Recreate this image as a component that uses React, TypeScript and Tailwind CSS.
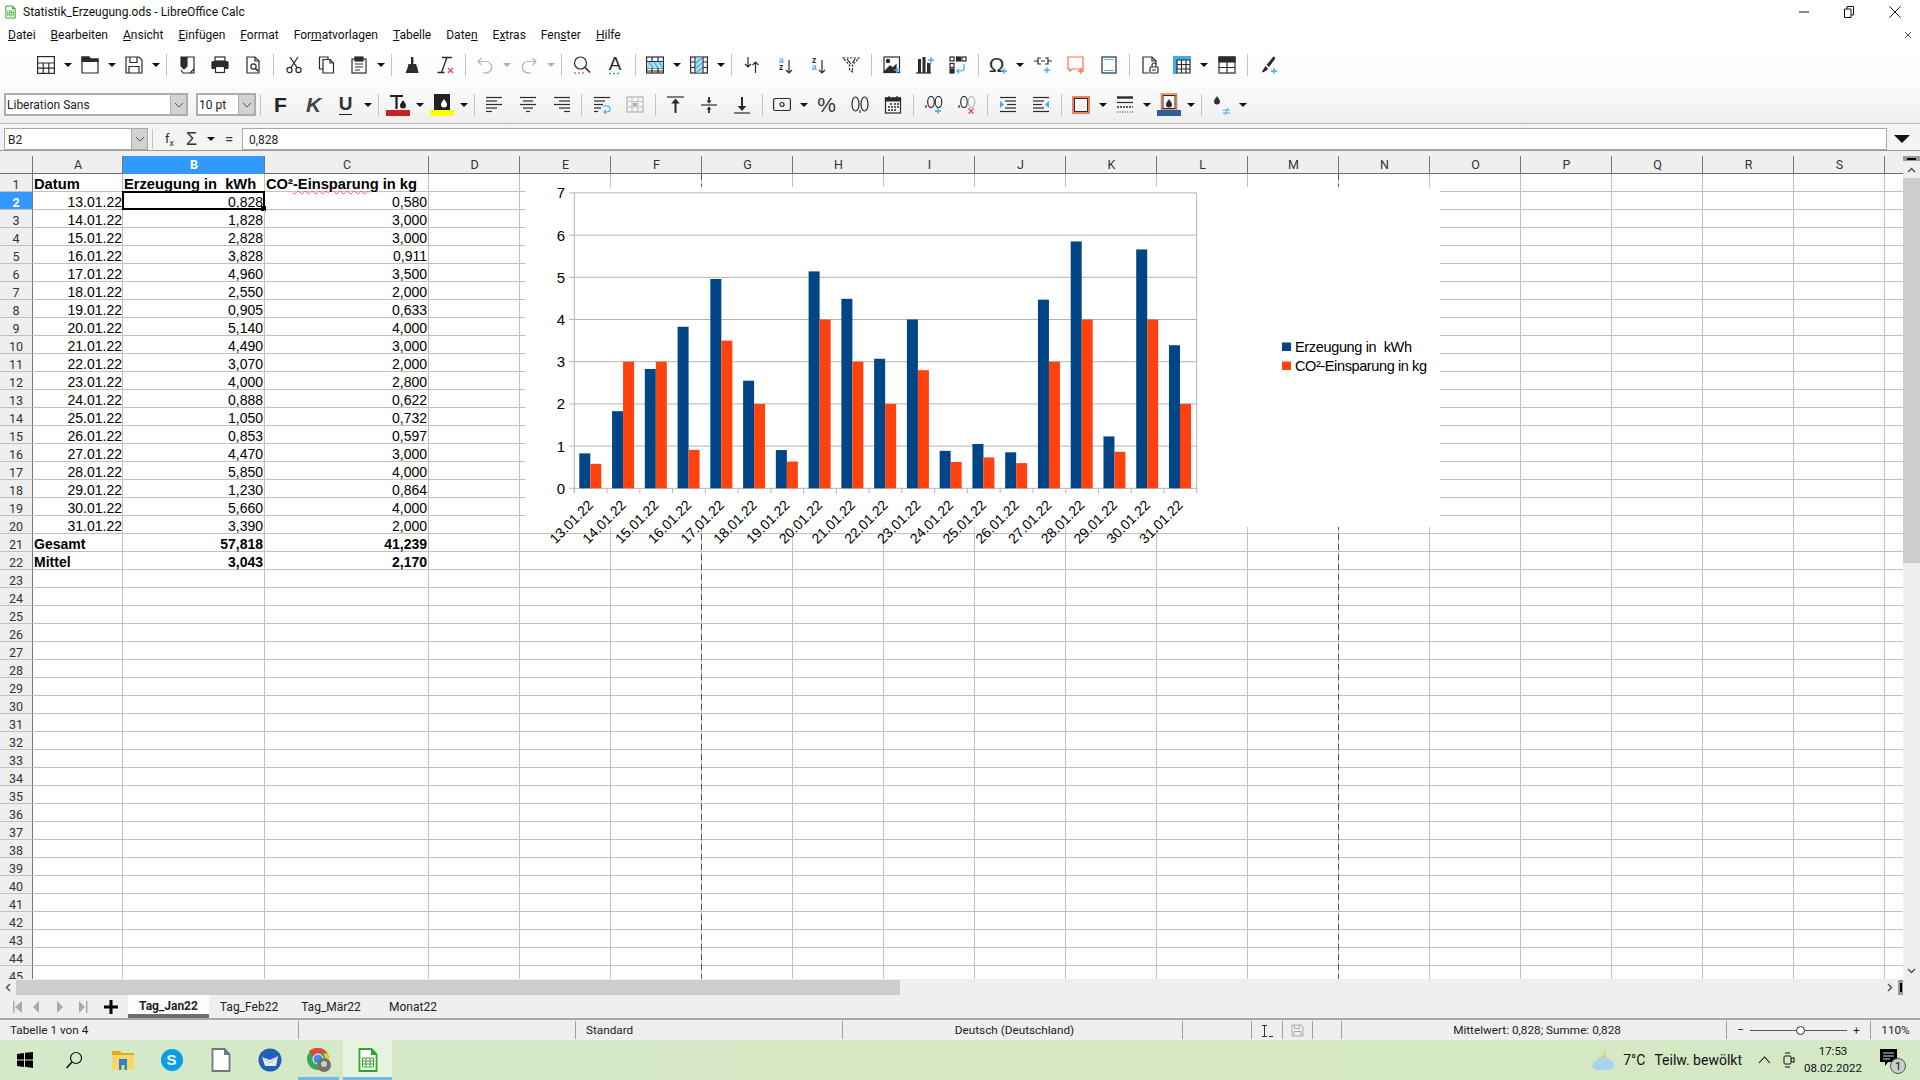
import type { ReactNode } from "react";

const uiFont = "font-['Roboto',sans-serif]";
const ink = "#2b2b2b";
const blue = "#3daee9";
const red = "#e0565b";
const coral = "#f0734a";

// ---- sheet data ----
const rows: [string, string, string][] = [
  ["13.01.22", "0,828", "0,580"],
  ["14.01.22", "1,828", "3,000"],
  ["15.01.22", "2,828", "3,000"],
  ["16.01.22", "3,828", "0,911"],
  ["17.01.22", "4,960", "3,500"],
  ["18.01.22", "2,550", "2,000"],
  ["19.01.22", "0,905", "0,633"],
  ["20.01.22", "5,140", "4,000"],
  ["21.01.22", "4,490", "3,000"],
  ["22.01.22", "3,070", "2,000"],
  ["23.01.22", "4,000", "2,800"],
  ["24.01.22", "0,888", "0,622"],
  ["25.01.22", "1,050", "0,732"],
  ["26.01.22", "0,853", "0,597"],
  ["27.01.22", "4,470", "3,000"],
  ["28.01.22", "5,850", "4,000"],
  ["29.01.22", "1,230", "0,864"],
  ["30.01.22", "5,660", "4,000"],
  ["31.01.22", "3,390", "2,000"],
];
const wideCols = "DEFGHIJKLMNOPQRS".split("");
const menus: [string, string, string][] = [
  ["", "D", "atei"],
  ["", "B", "earbeiten"],
  ["", "A", "nsicht"],
  ["", "E", "infügen"],
  ["", "F", "ormat"],
  ["For", "m", "atvorlagen"],
  ["", "T", "abelle"],
  ["Date", "n", ""],
  ["E", "x", "tras"],
  ["Fen", "s", "ter"],
  ["", "H", "ilfe"],
];

// ---- toolbar pieces ----
function G({ children, w = 18, h = 18 }: { children: ReactNode; w?: number; h?: number }) {
  return (
    <svg width={w} height={h} viewBox={`0 0 ${w} ${h}`} fill="none" stroke={ink} strokeWidth="1.2">
      {children}
    </svg>
  );
}
const Plus = ({ x = 14, y = 14, c = blue }: { x?: number; y?: number; c?: string }) => (
  <path d={`M${x - 3} ${y}h6M${x} ${y - 3}v6`} stroke={c} strokeWidth="1.3" />
);
const Cross = ({ x = 14, y = 15 }: { x?: number; y?: number }) => (
  <path d={`M${x - 2.5} ${y - 2.5}l5 5M${x + 2.5} ${y - 2.5}l-5 5`} stroke={red} strokeWidth="1.5" />
);
const Drop = ({ x = 12, y = 8, c = ink }: { x?: number; y?: number; c?: string }) => (
  <path d={`M${x} ${y}c1.5 2.5 3 3.6 3 5.4a3 3 0 0 1-6 0c0-1.8 1.5-2.9 3-5.4z`} fill={c} stroke="none" />
);
function Lines({ ys }: { ys: [number, number, number][] }) {
  return (
    <>
      {ys.map(([y, a, b]) => (
        <path key={y + "-" + a} d={`M${a} ${y}H${b}`} />
      ))}
    </>
  );
}

function Btn({ children }: { children: ReactNode }) {
  return <div className="flex w-[33px] shrink-0 items-center justify-center">{children}</div>;
}
function Drp({ children, off }: { children: ReactNode; off?: boolean }) {
  return (
    <div className="flex w-[44px] shrink-0 items-center">
      <div className="flex w-[31px] items-center justify-center">{children}</div>
      <div className="flex w-[13px] justify-center">
        <div className={`h-0 w-0 border-x-[4px] border-t-[4px] border-x-transparent ${off ? "border-t-[#b0b0b0]" : "border-t-[#111]"}`} />
      </div>
    </div>
  );
}
function Sep() {
  return (
    <div className="flex w-[8px] shrink-0 justify-center">
      <div className="h-[22px] w-px bg-[#c4c4c4]" />
    </div>
  );
}

function ToolbarTop() {
  return (
    <div className="flex h-[38px] items-center pl-[30.5px]">
      <Drp>
        <G><rect x=".6" y=".6" width="16.8" height="16.8" /><path d="M.6 7h16.8M.6 12.2h16.8M6.2 7v10.4M11.8 7v10.4" /></G>
      </Drp>
      <Drp>
        <G><path d="M1 1h7l1.5 2H17v14H1z" /><path d="M1 1h7l1.5 2H17v2.5H1z" fill={ink} /></G>
      </Drp>
      <Drp>
        <G><path d="M1 1h13l3 3v13H1z" /><path d="M5 1v5.5h7V1M4 17v-6.5h10V17" /></G>
      </Drp>
      <Sep />
      <Btn>
        <G><path d="M9 1h7v16H5l-2-3" /><path d="M3 1h6v9l-3 3-3-3z" fill={ink} /><path d="M12 17l4-4" /></G>
      </Btn>
      <Btn>
        <G><rect x="4" y="1" width="10" height="4" /><rect x="1" y="5.5" width="16" height="7" rx="1" fill={ink} /><rect x="4.5" y="10.5" width="9" height="6" fill="#fff" /></G>
      </Btn>
      <Btn>
        <G><path d="M3 1h8l4 4v12H3z" /><path d="M11 1v4h4" /><circle cx="9.5" cy="10.5" r="2.6" /><path d="M11.5 12.5l2.6 2.6" strokeWidth="1.6" /></G>
      </Btn>
      <Sep />
      <Btn>
        <G><circle cx="4.5" cy="14" r="2.6" /><circle cx="13.5" cy="14" r="2.6" /><path d="M5.8 11.8L13 1M12.2 11.8L5 1" /></G>
      </Btn>
      <Btn>
        <G><path d="M5 13H1.5V1H10v2.5" /><path d="M5 3.5h7l3.5 3.5v10H5z" /><path d="M12 3.5V7h3.5" /></G>
      </Btn>
      <Drp>
        <G><rect x="2" y="3" width="14" height="14" /><rect x="5" y="1" width="8" height="4" fill={ink} /><path d="M5 8h8M5 11h8M5 14h5" /></G>
      </Drp>
      <Sep />
      <Btn>
        <G><rect x="8" y="1" width="2.4" height="7" fill={ink} stroke="none" /><path d="M5.5 8h7.5l1.5 4 1 5H2.5l2-5z" fill={ink} stroke="none" /></G>
      </Btn>
      <Btn>
        <G><path d="M6 1.5h10M11 1.5L5.5 16.5M1.5 16.5h7" strokeWidth="1.3" /><Cross x={14.5} y={14.5} /></G>
      </Btn>
      <Sep />
      <Drp off>
        <G><path d="M5.5 2L2 5.5 5.5 9M2 5.5h8a5.7 5.7 0 0 1 0 11.4H7" stroke="#b4b4b4" /></G>
      </Drp>
      <Drp off>
        <G><path d="M12.5 2L16 5.5 12.5 9M16 5.5H8a5.7 5.7 0 0 0 0 11.4h3" stroke="#b4b4b4" /></G>
      </Drp>
      <Sep />
      <Btn>
        <G><circle cx="7.5" cy="7" r="6" /><path d="M12 11.5l5 5" strokeWidth="1.5" /><path d="M1 17h10" stroke={coral} strokeWidth="1.6" strokeDasharray="2 2" /></G>
      </Btn>
      <Btn>
        <svg className="overflow-visible" width="18" height="20" viewBox="0 0 18 20">
          <text x="9" y="14.5" textAnchor="middle" fontFamily="Liberation Sans" fontSize="19" fill={ink}>A</text>
          <path d="M3 18.5h11" stroke="#3fae5a" strokeWidth="1.6" strokeDasharray="2 2" />
        </svg>
      </Btn>
      <Sep />
      <Drp>
        <G><rect x=".6" y="1" width="16.8" height="16" /><path d="M.6 5.5h16.8M.6 12h16.8M.6 15h16.8M6 1v4.5M12 1v4.5M6 12v5M12 12v5" /><path d="M1 6h16v6H1z" fill="#a8def5" stroke="none" /><path d="M3 6l4 6M8 6l4 6M13 6l4 6" stroke={blue} /></G>
      </Drp>
      <Drp>
        <G><rect x=".6" y="1" width="16.8" height="16" /><path d="M5 1v16M13 1v16M.6 6h4.4M.6 11.5h4.4M13 6h4.4M13 11.5h4.4" /><path d="M6 1.5h6v15H6z" fill="#a8def5" stroke="none" /><path d="M6 7l6-5M6 12l6-5M6 17l6-5" stroke={blue} /></G>
      </Drp>
      <Sep />
      <Btn>
        <G><path d="M5 1v10M2 8l3 3 3-3" /><path d="M12.5 17V6M9.5 9l3-3 3 3" /></G>
      </Btn>
      <Btn>
        <svg className="overflow-visible" width="18" height="18" viewBox="0 0 18 18" fill="none">
          <text x="5" y="6.5" textAnchor="middle" fontFamily="Liberation Sans" fontWeight="700" fontSize="8.5" fill={blue}>a</text>
          <text x="5" y="14" textAnchor="middle" fontFamily="Liberation Sans" fontWeight="700" fontSize="8.5" fill={ink}>z</text>
          <path d="M13 4v13M10 14l3 3 3-3" stroke={ink} strokeWidth="1.2" />
        </svg>
      </Btn>
      <Btn>
        <svg className="overflow-visible" width="18" height="18" viewBox="0 0 18 18" fill="none">
          <text x="5" y="6.5" textAnchor="middle" fontFamily="Liberation Sans" fontWeight="700" fontSize="8.5" fill={ink}>z</text>
          <text x="5" y="14" textAnchor="middle" fontFamily="Liberation Sans" fontWeight="700" fontSize="8.5" fill={blue}>a</text>
          <path d="M13 4v13M10 14l3 3 3-3" stroke={ink} strokeWidth="1.2" />
        </svg>
      </Btn>
      <Btn>
        <G><path d="M1 2h16l-6.5 7v7l-3-2V9z" strokeDasharray="2.2 1.4" /><path d="M5 3l4 5M13 3l-2.5 4" /></G>
      </Btn>
      <Sep />
      <Btn>
        <G><rect x="1" y="1" width="15.5" height="15.5" /><circle cx="5" cy="5" r="1.6" fill={ink} /><path d="M1 16l6-6 3 2 3-3v7H1z" fill={ink} /><Plus x={14} y={14} /></G>
      </Btn>
      <Btn>
        <G><path d="M0 17h15" /><rect x="2" y="3" width="3" height="14" fill={ink} stroke="none" /><rect x="6.5" y="1" width="3" height="16" fill={ink} stroke="none" /><rect x="11" y="7" width="3.5" height="10" fill={ink} stroke="none" /><Plus x={15} y={4} /></G>
      </Btn>
      <Btn>
        <G><rect x="1" y="1" width="4" height="4" /><rect x="7.5" y="1" width="4" height="4" fill={ink} /><rect x="13" y="1" width="4" height="4" /><rect x="1" y="7.5" width="4" height="4" /><rect x="1" y="13" width="4" height="4" fill={ink} /><path d="M15 8v4a3 3 0 0 1-3 3H8M10 13l-2 2 2 2" stroke={blue} /></G>
      </Btn>
      <Sep />
      <Drp>
        <svg className="overflow-visible" width="20" height="20" viewBox="0 0 20 20" fill="none">
          <text x="8.5" y="17" textAnchor="middle" fontFamily="Liberation Sans" fontSize="21" fill={ink}>Ω</text>
          <Plus x={16} y={16} />
        </svg>
      </Drp>
      <Btn>
        <G><path d="M0 5h4M14 5h4M7 5h4" /><path d="M7 2H4v6h3M11 2h3v6h-3" /><Plus x={13} y={14} /></G>
      </Btn>
      <Btn>
        <G><path d="M1 1h15v12H5l-2 2-.5-2H1z" stroke={coral} /><Plus x={14} y={15} c={coral} /></G>
      </Btn>
      <Btn>
        <G><rect x="2" y="1" width="14" height="16" /><path d="M4.5 3.5h9M4.5 14.5h9" stroke={blue} /></G>
      </Btn>
      <Sep />
      <Btn>
        <G><path d="M8 17H2V1h9l4 4v3" /><path d="M11 1v4h4" /><rect x="9" y="11" width="8" height="6" rx="1" /><path d="M11 11V9a2 2 0 0 1 4 0v2M11 14h4" /></G>
      </Btn>
      <Drp>
        <G><path d="M0 0h18v4H4v14H0z" fill={blue} stroke="none" /><path d="M4 4h13v13H4zM4 8.5h13M4 13h13M8.5 4v13M13 4v13" /></G>
      </Drp>
      <Btn>
        <G><rect x="1" y="1" width="16" height="16" /><path d="M1 1h16v5H1z" fill={ink} /><path d="M1 11.5h16M9 6v11" /></G>
      </Btn>
      <Sep />
      <Btn>
        <G><path d="M14 1c1.5-.5 2.5.5 2 2L10 11 7.5 9z" fill={ink} stroke="none" /><path d="M6.5 10L9 12.5c-1 2-3 3.5-6.5 4 1-1.5 2-3.5 4-6.5z" fill={ink} stroke="none" /><Plus x={15} y={15} /></G>
      </Btn>
    </div>
  );
}

function Combo({ label, w }: { label: string; w: string }) {
  return (
    <div className={`flex h-[23px] items-stretch border-2 border-[#adadad] bg-white text-[12px] text-[#222] ${w}`}>
      <div className="flex-1 truncate pl-[1px] pt-[1px]">{label}</div>
      <div className="flex w-[16px] items-center justify-center border-l border-[#adadad] bg-[#d2d2d2]">
        <svg width="10" height="6" viewBox="0 0 10 6" fill="none" stroke="#555" strokeWidth="1"><path d="M1 1l4 4 4-4" /></svg>
      </div>
    </div>
  );
}

function ToolbarBottom() {
  return (
    <div className="flex h-[39px] items-center pl-[4px] pt-[2px]">
      <Combo label="Liberation Sans" w="w-[184px]" />
      <div className="w-[8px]" />
      <Combo label="10 pt" w="w-[60px]" />
      <Sep />
      <Btn><span className="font-['Liberation_Sans',sans-serif] text-[21px] leading-none font-bold text-[#222]">F</span></Btn>
      <Btn><span className="font-['Liberation_Sans',sans-serif] text-[21px] leading-none font-bold text-[#444] italic">K</span></Btn>
      <Drp>
        <span className="border-b border-[#222] font-['Liberation_Sans',sans-serif] text-[19px] leading-[20px] font-bold text-[#333]">U</span>
      </Drp>
      <Sep />
      <Drp>
        <svg width="24" height="22" viewBox="0 0 24 22" fill="none">
          <path d="M4 2h13M10.5 2v13" stroke="#222" strokeWidth="2.2" />
          <Drop x={17} y={6} c="#222" />
          <rect x="0" y="16" width="24" height="6" fill="#c5221f" />
        </svg>
      </Drp>
      <Drp>
        <svg width="24" height="22" viewBox="0 0 24 22" fill="none">
          <rect x="4" y="0" width="16" height="16" fill="#222" />
          <Drop x={14} y={5} c="#fff" />
          <rect x="0" y="16" width="24" height="6" fill="#ffff00" />
        </svg>
      </Drp>
      <Sep />
      <Btn><G><Lines ys={[[1.5, 0, 16], [5, 0, 11], [8.5, 0, 16], [12, 0, 11], [15.5, 0, 6]]} /></G></Btn>
      <Btn><G><Lines ys={[[1.5, 1, 17], [5, 4, 14], [8.5, 1, 17], [12, 4, 14], [15.5, 7, 11]]} /></G></Btn>
      <Btn><G><Lines ys={[[1.5, 2, 18], [5, 7, 18], [8.5, 2, 18], [12, 7, 18], [15.5, 12, 18]]} /></G></Btn>
      <Sep />
      <Btn>
        <G><Lines ys={[[1.5, 1, 17], [5, 1, 12], [8.5, 1, 10], [12, 1, 8], [15.5, 1, 5]]} /><path d="M10 10h4a3 3 0 0 1 0 6h-3M13 14l-2 2 2 2" stroke={blue} /></G>
      </Btn>
      <Btn>
        <G><rect x="1" y="1" width="16" height="15" stroke="#b4b4b4" /><path d="M1 5.5h16M1 11h16M6 1v15M12 1v15" stroke="#c4c4c4" /><path d="M7 7l2 1.5-2 1.5M11 7L9 8.5l2 1.5" stroke="#999" /></G>
      </Btn>
      <Sep />
      <Btn><G><path d="M0 1h17" /><path d="M8.5 17V5" strokeWidth="2" /><path d="M5.5 7l3-3.5 3 3.5z" fill={ink} /></G></Btn>
      <Btn><G><path d="M1 9h16" /><path d="M9 1v5M9 12v5" strokeWidth="1.8" /><path d="M6.5 4.5L9 7.5l2.5-3zM6.5 13.5L9 10.5l2.5 3z" fill={ink} stroke="none" /></G></Btn>
      <Btn><G><path d="M1 17h16" /><path d="M9 1v12" strokeWidth="2" /><path d="M6 10.5l3 3.5 3-3.5z" fill={ink} /></G></Btn>
      <Sep />
      <Drp>
        <G><rect x=".6" y="2.5" width="16.8" height="12" rx="1.5" /><circle cx="9" cy="8.5" r="2" /></G>
      </Drp>
      <Btn><span className="font-['Liberation_Sans',sans-serif] text-[21px] leading-none text-[#333]">%</span></Btn>
      <Btn>
        <G><ellipse cx="4.5" cy="8" rx="3.5" ry="7" /><ellipse cx="13.5" cy="8" rx="3.5" ry="7" /><path d="M9 14v3" /></G>
      </Btn>
      <Btn>
        <G><rect x="1.5" y="2" width="15" height="15" /><path d="M1.5 2h15v3h-15zM5 0v3M13 0v3" fill={ink} /><path d="M6 8h2M10 8h2M13 8h2M4 11h2M7 11h2M10 11h2M13 11h2M4 14h2M7 14h2M10 14h2" strokeWidth="1.6" /></G>
      </Btn>
      <Sep />
      <Btn>
        <G><ellipse cx="6" cy="6" rx="3.3" ry="5.5" /><ellipse cx="13.5" cy="6" rx="3.3" ry="5.5" /><path d="M1 9v3" /><Plus x={13} y={15} /></G>
      </Btn>
      <Btn>
        <G><ellipse cx="6" cy="6" rx="3.3" ry="5.5" /><ellipse cx="13.5" cy="6" rx="3.3" ry="5.5" stroke="#b4b4b4" /><path d="M1 9v3" /><Cross x={13} y={15} /></G>
      </Btn>
      <Sep />
      <Btn>
        <G><Lines ys={[[1.5, 1, 17], [5, 6, 17], [8.5, 8, 17], [12, 6, 17], [15.5, 1, 17]]} /><path d="M1 5v7l4-3.5z" fill={blue} stroke="none" /></G>
      </Btn>
      <Btn>
        <G><Lines ys={[[1.5, 1, 17], [5, 1, 12], [8.5, 1, 10], [12, 1, 12], [15.5, 1, 17]]} /><path d="M17 5v7l-4-3.5z" fill={blue} stroke="none" /></G>
      </Btn>
      <Sep />
      <Drp>
        <G><rect x="1" y="1" width="16" height="16" stroke={coral} strokeWidth="1.8" /><rect x="2.5" y="2.5" width="13" height="13" stroke={ink} strokeWidth="1" /></G>
      </Drp>
      <Drp>
        <G><path d="M1 1.5h16" strokeWidth="2.4" /><path d="M1 6.5h16" strokeWidth="1.2" /><path d="M1 11h16" strokeWidth="1.6" strokeDasharray="2 1" /><path d="M1 16h16" strokeWidth="1.2" strokeDasharray="1 1.5" /></G>
      </Drp>
      <Drp>
        <svg width="24" height="23" viewBox="0 0 24 23" fill="none">
          <rect x="4.5" y="1" width="15" height="16" stroke={coral} strokeWidth="1.5" fill="none" />
          <rect x="6" y="2.5" width="12" height="13" stroke={ink} strokeWidth="1" />
          <Drop x={12} y={6} c={ink} />
          <rect x="0" y="17" width="24" height="6" fill="#2a6099" />
        </svg>
      </Drp>
      <Sep />
      <Drp>
        <svg width="22" height="20" viewBox="0 0 22 20" fill="none">
          <Drop x={7} y={1} c="#333" />
          <path d="M13 15h7M13 18h7M18 13l-3 7" stroke={blue} strokeWidth="1" />
        </svg>
      </Drp>
    </div>
  );
}

function FormulaBar() {
  return (
    <div className="flex h-[27px] items-stretch border-b border-[#9a9a9a] bg-[#f4f4f4] pl-[4px] pt-[4px]">
      <div className="flex w-[144px] items-stretch border-y border-l border-[#a9a9a9] bg-white text-[12px] text-[#222]">
        <div className="flex-1 pl-[3px] pt-[2px]">B2</div>
        <div className="flex w-[17px] items-center justify-center border-x border-[#a9a9a9] bg-[#d2d2d2]">
          <svg width="10" height="6" viewBox="0 0 10 6" fill="none" stroke="#555" strokeWidth="1"><path d="M1 1l4 4 4-4" /></svg>
        </div>
      </div>
      <div className="ml-[4px] mt-[1px] h-[20px] w-px bg-[#c4c4c4]" />
      <div className="ml-[12px] flex w-[77px] items-center gap-[7px] text-[13px] text-[#333]">
        <span className="w-[14px] text-[13px] whitespace-nowrap">f<sub className="text-[9px]">x</sub></span>
        <span className="w-[14px] font-['Liberation_Sans',sans-serif] text-[18px] leading-none">Σ</span>
        <div className="h-0 w-0 border-x-[4px] border-t-[4px] border-x-transparent border-t-[#111]" />
        <span className="ml-[3px] text-[15px]">=</span>
      </div>
      <div className="w-[645px] flex-1 border border-[#a9a9a9] bg-white pl-[6px] pt-[2px] text-[12px] text-[#222]">0,828</div>
      <div className="flex w-[33px] items-center justify-center pr-[4px]">
        <div className="h-0 w-0 border-x-[8px] border-t-[8px] border-x-transparent border-t-[#111]" />
      </div>
    </div>
  );
}

// ---- grid ----
function ColHead({ label, w, active }: { label: string; w: string; active?: boolean }) {
  return (
    <div className={`flex h-[18px] shrink-0 items-center justify-center border-r border-[#777] pl-[1px] pt-[1px] text-[12.5px] ${w} ${active ? "bg-[#3399ff] font-bold text-white" : "text-[#333]"}`}>
      {label}
    </div>
  );
}

function GridRow({ n }: { n: number }) {
  const d = n >= 2 && n <= 20 ? rows[n - 2] : null;
  const size = n === 1 ? "text-[14.7px]" : "text-[14px]";
  const cell = `h-[18px] shrink-0 overflow-visible border-b border-r border-[#c0c0c0] whitespace-pre font-['Liberation_Sans',sans-serif] ${size} leading-[21px] text-black`;
  let a: ReactNode = d ? d[0] : "";
  let b: ReactNode = d ? d[1] : "";
  let c: ReactNode = d ? d[2] : "";
  let bold = false;
  if (n === 1) {
    a = "Datum";
    b = "Erzeugung in  kWh";
    c = (
      <>
        CO²<span className="underline decoration-[#ff5a5a] decoration-wavy decoration-1">-Einsparung</span> in kg
      </>
    );
    bold = true;
  }
  if (n === 21) {
    a = "Gesamt";
    b = "57,818";
    c = "41,239";
    bold = true;
  }
  if (n === 22) {
    a = "Mittel";
    b = "3,043";
    c = "2,170";
    bold = true;
  }
  const aRight = n >= 2 && n <= 20;
  const bRight = n >= 2 && n <= 22;
  const w = bold ? "font-bold" : "";
  return (
    <div className="flex">
      <div className={`flex h-[18px] w-[33px] shrink-0 items-center justify-center border-b border-r border-b-[#c0c0c0] border-r-[#777] pt-[5px] text-[12.5px] ${n === 2 ? "bg-[#3399ff] font-bold text-white" : "bg-[#efefef] text-[#333]"}`}>
        {n}
      </div>
      <div className={`${cell} ${w} w-[90px] ${aRight ? "text-right" : "pl-[1px]"}`}>{a}</div>
      <div className={`${cell} ${w} relative w-[142px] ${bRight ? "pr-px text-right" : "pl-[1px]"}`}>
        {b}
        {n === 2 && (
          <div className="absolute -left-px -top-px h-[19px] w-[143px] border-2 border-black">
            <div className="absolute -bottom-[3px] -right-[3px] h-[5px] w-[5px] bg-black" />
          </div>
        )}
      </div>
      <div className={`${cell} ${w} w-[164px] ${bRight ? "pr-px text-right" : "pl-[1px]"}`}>{c}</div>
      {wideCols.map((k) => (
        <div key={k} className="h-[18px] w-[91px] shrink-0 border-b border-r border-[#c0c0c0]" />
      ))}
      <div className="h-[18px] flex-1 border-b border-[#c0c0c0]" />
    </div>
  );
}

// drawn in page coordinates, see viewBox
function Chart() {
  const x0 = 574.3;
  const y0 = 488.3;
  const unit = 42.2;
  const step = 32.76;
  return (
    <svg className="absolute left-[525px] top-[13px] overflow-visible" width="915" height="340" viewBox="525 187 915 340">
      <rect x="525" y="187" width="915" height="340" fill="#fff" />
      {[0, 1, 2, 3, 4, 5, 6, 7].map((v) => (
        <g key={v}>
          <path d={`M${x0 - 5} ${y0 - v * unit}H1196.7`} stroke="#b3b3b3" strokeWidth="1" />
          <text x="565" y={y0 - v * unit + 5.5} textAnchor="end" fontFamily="Liberation Sans" fontSize="15" fill="#000">{v}</text>
        </g>
      ))}
      <path d={`M${x0} 193V493`} stroke="#b3b3b3" />
      <path d="M1196.7 193V493" stroke="#b3b3b3" />
      {rows.map((r, i) => {
        const cx = x0 + step * i;
        const bv = parseFloat(r[1].replace(",", "."));
        const ov = parseFloat(r[2].replace(",", "."));
        const lx = cx + step / 2 + 3.3;
        return (
          <g key={r[0]}>
            <path d={`M${cx} ${y0}v5`} stroke="#b3b3b3" />
            <rect x={cx + 5} y={y0 - bv * unit} width="11" height={bv * unit} fill="#004586" />
            <rect x={cx + 16} y={y0 - ov * unit} width="11" height={ov * unit} fill="#ff420e" />
            <text x={lx} y="506" textAnchor="end" fontFamily="Liberation Sans" fontSize="14" fill="#000" transform={`rotate(-45 ${lx} 506)`}>{r[0]}</text>
          </g>
        );
      })}
      <rect x="1282" y="342.5" width="9" height="8.5" fill="#004586" />
      <rect x="1282" y="361.5" width="9" height="8.5" fill="#ff420e" />
      <text x="1295" y="352" fontFamily="Liberation Sans" fontSize="14.5" fill="#000" textLength="117" lengthAdjust="spacing" xmlSpace="preserve">Erzeugung in  kWh</text>
      <text x="1295" y="371" fontFamily="Liberation Sans" fontSize="14.5" fill="#000" textLength="132" lengthAdjust="spacing">CO²-Einsparung in kg</text>
    </svg>
  );
}

function Grid() {
  const dash = "absolute bottom-0 top-0 w-px bg-[repeating-linear-gradient(to_bottom,#555_0,#555_6px,transparent_6px,transparent_10px)]";
  return (
    <div className="flex min-w-0 flex-1 flex-col overflow-hidden">
      <div className="flex h-[23px] shrink-0 border-b border-[#6e6e6e] bg-[#efefef] pt-[5px]">
        <div className="h-[18px] w-[33px] shrink-0 border-r border-[#777]" />
        <ColHead label="A" w="w-[90px]" />
        <ColHead label="B" w="w-[142px]" active />
        <ColHead label="C" w="w-[164px]" />
        {wideCols.map((k) => (
          <ColHead key={k} label={k} w="w-[91px]" />
        ))}
      </div>
      <div className="relative min-h-0 flex-1 overflow-hidden bg-white">
        {Array.from({ length: 45 }, (_, i) => (
          <GridRow key={i} n={i + 1} />
        ))}
        {/* page breaks */}
        <div className={`${dash} left-[701px]`} />
        <div className={`${dash} left-[1338px]`} />
        <Chart />
      </div>
    </div>
  );
}

function VScroll() {
  return (
    <div className="flex w-[17px] shrink-0 flex-col bg-[#efefef] pt-[5px]">
      <div className="flex h-[5px] items-center justify-center bg-[#9a9a9a]"><div className="h-[2px] w-[9px] bg-black" /></div>
      <div className="flex h-[17px] items-center justify-center">
        <svg width="9" height="6" viewBox="0 0 9 6" fill="none" stroke="#555" strokeWidth="1.5"><path d="M1 5l3.5-3.5L8 5" /></svg>
      </div>
      <div className="h-[385px] bg-[#cdcdcd]" />
      <div className="flex-1" />
      <div className="flex h-[17px] items-center justify-center">
        <svg width="9" height="6" viewBox="0 0 9 6" fill="none" stroke="#555" strokeWidth="1.5"><path d="M1 1l3.5 3.5L8 1" /></svg>
      </div>
    </div>
  );
}

function HScroll() {
  return (
    <div className="flex h-[16px] shrink-0 items-stretch bg-[#efefef] pt-px">
      <div className="flex w-[16px] items-center justify-center">
        <svg width="6" height="9" viewBox="0 0 6 9" fill="none" stroke="#555" strokeWidth="1.5"><path d="M5 1L1.5 4.5 5 8" /></svg>
      </div>
      <div className="w-[884px] bg-[#cdcdcd]" />
      <div className="flex-1" />
      <div className="flex w-[17px] items-center justify-center">
        <svg width="6" height="9" viewBox="0 0 6 9" fill="none" stroke="#555" strokeWidth="1.5"><path d="M1 1l3.5 3.5L1 8" /></svg>
      </div>
      <div className="flex w-[5px] items-center justify-center bg-[#9a9a9a]"><div className="h-[9px] w-[2px] bg-black" /></div>
      <div className="w-[17px]" />
    </div>
  );
}

function SheetTabs() {
  return (
    <div className={`relative flex h-[23px] shrink-0 items-stretch bg-[#efefef] text-[12px] text-[#222] ${uiFont}`}>
      <div className="flex w-[128px] items-center">
        <svg className="ml-[12px]" width="80" height="14" viewBox="0 0 80 14" fill="#aaa" stroke="none">
          <path d="M1 1h1.5v12H1zM10 1v12L3 7zM27 1v12l-6-6zM45 1v12l6-6zM67 1v12l6-6zM74 1h1.5v12H74z" />
        </svg>
        <svg className="ml-[12px]" width="14" height="14" viewBox="0 0 14 14" fill="#000"><path d="M5.5 0h3v5.5H14v3H8.500V14h-3V8.500H0v-3h5.500z" /></svg>
      </div>
      <div className="flex w-[81px] items-center justify-center border-b-[4px] border-[#6e6e6e] bg-white pt-[3px] font-bold">Tag_Jan22</div>
      <div className="flex w-[80px] items-center justify-center">Tag_Feb22</div>
      <div className="flex w-[84px] items-center justify-center">Tag_Mär22</div>
      <div className="flex w-[80px] items-center justify-center">Monat22</div>
    </div>
  );
}

function StatusCell({ w, children, center }: { w: string; children?: ReactNode; center?: boolean }) {
  return (
    <div className={`flex h-[18px] shrink-0 items-center whitespace-nowrap border-r border-[#a0a0a0] pt-[1px] ${w} ${center ? "justify-center" : "pl-[10px]"}`}>
      {children}
    </div>
  );
}

function StatusBar() {
  return (
    <div className={`flex h-[22px] shrink-0 items-center border-t-2 border-[#a8a8a8] bg-[#efefef] text-[11.75px] text-[#222] ${uiFont}`}>
      <StatusCell w="w-[299px]">Tabelle 1 von 4</StatusCell>
      <StatusCell w="w-[277px]" />
      <StatusCell w="w-[267px]">Standard</StatusCell>
      <StatusCell w="w-[340px]" center><span className="pl-[4px]">Deutsch (Deutschland)</span></StatusCell>
      <StatusCell w="w-[69px]" />
      <StatusCell w="w-[31px]" center>
        <svg width="14" height="14" viewBox="0 0 14 14" fill="none" stroke="#333"><path d="M2 1.5h5M2 12.5h5M4.5 1.5v11M9 12.5h4" /></svg>
      </StatusCell>
      <StatusCell w="w-[30px]" center>
        <svg width="13" height="13" viewBox="0 0 13 13" fill="none" stroke="#aaa"><path d="M1 1h9l2 2v9H1zM3.5 1v3.5h5V1M3 12V7.5h7V12" /></svg>
      </StatusCell>
      <StatusCell w="w-[29px]" />
      <StatusCell w="w-[385px]" center><span className="pl-[6px]">Mittelwert: 0,828; Summe: 0,828</span></StatusCell>
      <StatusCell w="w-[144px]" center>
        <span>−</span>
        <div className="relative mx-[6px] h-px w-[97px] bg-[#555]">
          <div className="absolute -top-[4px] left-[46px] h-[9px] w-[9px] rounded-full border border-[#333] bg-white" />
        </div>
        <span>+</span>
      </StatusCell>
      <div className="flex-1 pt-[1px] text-center">110%</div>
    </div>
  );
}

// ---- taskbar ----
function Tray({ children, active, under }: { children: ReactNode; active?: boolean; under?: boolean }) {
  return (
    <div className={`relative flex h-[40px] w-[49px] items-center justify-center ${active ? "bg-[#e6f3e0]" : ""}`}>
      {children}
      {under && <div className={`absolute bottom-0 h-[3px] bg-[#76b9ed] ${active ? "inset-x-0" : "inset-x-[4px]"}`} />}
    </div>
  );
}

function CalcGlyph({ size = 20, h = 24 }: { size?: number; h?: number }) {
  return (
    <svg width={size} height={h} viewBox="0 0 20 24" fill="none">
      <path d="M1.5 1h12l5 5v17h-17z" fill="#fff" stroke="#2fa52f" strokeWidth="1.8" />
      <path d="M13 1l6 6h-6z" fill="#2fa52f" />
      <path d="M4.5 10h11v9h-11zM4.5 13h11M4.5 16h11M8 10v9M12 10v9" stroke="#2fa52f" strokeWidth="1" />
    </svg>
  );
}

function Taskbar() {
  return (
    <div className={`flex h-[40px] shrink-0 items-center bg-linear-to-r from-[#d3e9ca] via-[#d8e9c4] to-[#d3e8c5] text-[#111] ${uiFont}`}>
      <Tray>
        <svg width="16" height="16" viewBox="0 0 16 16" fill="#000"><path d="M0 2l7-1v6.5H0zM8 .8L16 0v7.5H8zM0 8.5h7V15l-7-1zM8 8.5h8V16l-8-1.2z" /></svg>
      </Tray>
      <Tray>
        <svg width="18" height="18" viewBox="0 0 18 18" fill="none" stroke="#111" strokeWidth="1.2"><circle cx="11" cy="7" r="5.5" /><path d="M7 11l-5.500 6" strokeWidth="1.6" /></svg>
      </Tray>
      <Tray>
        <svg width="22" height="20" viewBox="0 0 22 20">
          <path d="M0 1h8l2 2h12v4H0z" fill="#e5a823" />
          <path d="M0 5h22v15H0z" fill="#fbd565" />
          <path d="M7 9h8v11h-2.5v-5h-3v5H7z" fill="#2a7fd0" />
        </svg>
      </Tray>
      <Tray>
        <div className="flex h-[22px] w-[22px] items-center justify-center rounded-full bg-[#0a9ee6] font-['Liberation_Sans',sans-serif] text-[15px] font-bold text-white">S</div>
      </Tray>
      <Tray>
        <svg width="20" height="24" viewBox="0 0 20 24" fill="none">
          <path d="M1.5 1h12l5 5v17h-17z" fill="#fff" stroke="#777" strokeWidth="1.8" />
          <path d="M13 1l6 6h-6z" fill="#777" />
        </svg>
      </Tray>
      <Tray>
        <svg width="24" height="24" viewBox="0 0 24 24">
          <circle cx="12" cy="12" r="11.5" fill="#1f5fb4" />
          <path d="M4 9l8 3 8-4-2 10H7z" fill="#e8eef8" />
          <path d="M4 9l8 6 8-7" fill="none" stroke="#9db6dc" />
        </svg>
      </Tray>
      <Tray under>
        <svg width="26" height="26" viewBox="0 0 26 26">
          <circle cx="12" cy="12" r="11" fill="#3aa757" />
          <path d="M12 1a11 11 0 0 1 9.5 5.5H12A5.5 5.500 0 0 0 7 10L3 4a11 11 0 0 1 9-3z" fill="#dd4b3e" />
          <path d="M21.5 6.5A11 11 0 0 1 13 23l4-8.500a5.500 5.500 0 0 0 0-8z" fill="#f7c325" />
          <circle cx="12" cy="12" r="5" fill="#4688f1" stroke="#fff" />
          <circle cx="18" cy="18" r="7" fill="#6d7466" />
          <circle cx="18" cy="17" r="3" fill="#c9d1c5" />
        </svg>
      </Tray>
      <Tray active under>
        <CalcGlyph />
      </Tray>
      <div className="flex-1" />
      <div className="mr-[8px] flex items-center">
        <svg width="24" height="24" viewBox="0 0 24 24">
          <path d="M14 1a7 7 0 0 0 4 10 7 7 0 0 1-11-2 6 6 0 0 0 7-8z" fill="#f6bf26" />
          <path d="M6 22a4.5 4.5 0 0 1 0-9 6 6 0 0 1 11-1 5 5 0 0 1 2 10z" fill="#a9d4f0" />
        </svg>
      </div>
      <span className="text-[14px]">7°C</span>
      <span className="ml-[9px] text-[14px]">Teilw. bewölkt</span>
      <svg className="ml-[16px]" width="13" height="8" viewBox="0 0 13 8" fill="none" stroke="#111" strokeWidth="1.1"><path d="M1 7l5.5-6L12 7" /></svg>
      <svg className="ml-[11px]" width="14" height="18" viewBox="0 0 14 18" fill="none" stroke="#111"><rect x="2" y="5" width="7" height="8" rx="1" /><path d="M9 8l3-1.5v5L9 10M3 2h5M3 16h5" /></svg>
      <div className="flex w-[74px] flex-col items-center text-[11.5px] leading-[17px]">
        <span>17:53</span>
        <span>08.02.2022</span>
      </div>
      <div className="relative ml-[10px] mr-[16px] h-[24px] w-[24px]">
        <svg width="17" height="17" viewBox="0 0 17 17" className="absolute left-0 top-[1px]">
          <path d="M0 0h17v13H8l-3 4v-4H0z" fill="#000" />
          <path d="M3 4h11M3 7h11M3 10h7" stroke="#d3e8c5" />
        </svg>
        <div className="absolute bottom-[-2px] right-[-2px] flex h-[16px] w-[16px] items-center justify-center rounded-full border border-[#555] bg-[#c8cfc6] text-[11px] leading-none">1</div>
      </div>
    </div>
  );
}

export default function App() {
  return (
    <div className={`flex h-[1080px] w-[1920px] flex-col overflow-hidden bg-white ${uiFont}`}>
      <div className="flex h-[24px] shrink-0 items-center text-[12px] text-[#111]">
        <div className="ml-[5px] mr-[7px]"><CalcGlyph size={11} h={16} /></div>
        <span>Statistik_Erzeugung.ods - LibreOffice Calc</span>
        <div className="flex-1" />
        <svg width="10" height="2" className="mr-[35px]"><path d="M0 1h10" stroke="#111" /></svg>
        <svg width="10" height="12" className="mr-[35px]" fill="none" stroke="#111"><path d="M.5 3h6.5v8.500H.5zM3 3V.5h6.5V9H7" /></svg>
        <svg width="12" height="12" className="mr-[19px]" fill="none" stroke="#111"><path d="M.5.5l11 11M11.5.5l-11 11" /></svg>
      </div>
      <div className="flex h-[22px] shrink-0 items-center pl-[0.5px] text-[12px] text-[#111]">
        {menus.map(([pre, key, post]) => (
          <span key={pre + key} className="px-[7.5px] whitespace-nowrap">{pre}<u>{key}</u>{post}</span>
        ))}
        <div className="flex-1" />
        <svg width="8" height="8" className="mr-[8px]" fill="none" stroke="#555"><path d="M1 1l6 6M7 1L1 7" /></svg>
      </div>
      <div className="shrink-0 border-b border-[#b5b5b5] bg-linear-to-b from-white via-[#fcfcfc] to-[#efefef]">
        <ToolbarTop />
        <ToolbarBottom />
      </div>
      <FormulaBar />
      <div className="flex min-h-0 flex-1">
        <Grid />
        <VScroll />
      </div>
      <HScroll />
      <SheetTabs />
      <StatusBar />
      <Taskbar />
    </div>
  );
}
